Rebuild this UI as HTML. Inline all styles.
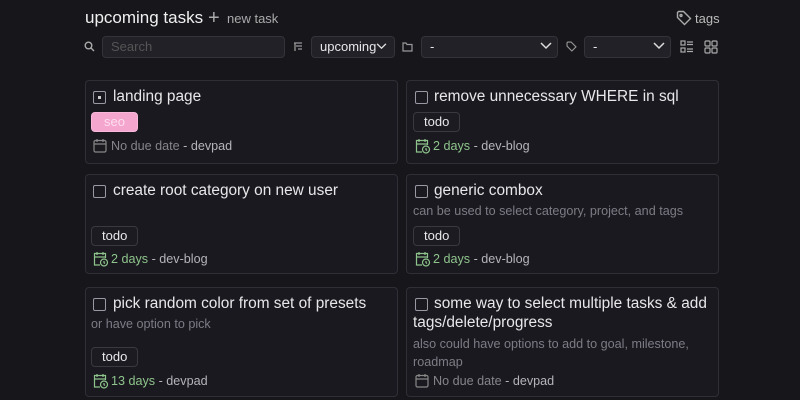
<!DOCTYPE html>
<html><head><meta charset="utf-8"><style>
*{margin:0;padding:0;box-sizing:border-box}
body{width:800px;height:400px;background:#17161b;font-family:"Liberation Sans",sans-serif;position:relative;overflow:hidden;color:#e6e6e6}
.a{position:absolute;white-space:nowrap}
.card{position:absolute;background:#1a191f;border:1px solid #302f37;border-radius:4px}
.cb{position:absolute;width:13px;height:13px;border:1.6px solid #9a99a3;border-radius:2px}
.t{position:absolute;font-size:15.4px;color:#e8e8ea;line-height:20px;white-space:nowrap}
.d{position:absolute;font-size:12.6px;color:#7d7c86;line-height:19px;white-space:nowrap}
.tag{position:absolute;height:20px;border:1px solid #3a3940;border-radius:4px;font-size:13px;line-height:18px;color:#e8e8ea;padding:0 10px;background:#1c1b21}
.f{position:absolute;font-size:12.6px;line-height:16px;white-space:nowrap;color:#b5b4bb}
.f svg{position:absolute;left:0;top:0}
.f>span{position:absolute;left:18px;top:0}
.g{color:#8ec48c}.n{color:#85848d}
.sel{position:absolute;height:22px;background:#222127;border:1px solid #34333a;border-radius:4px;font-size:13px;color:#e8e8ea;line-height:20px;padding-left:8px}
</style></head><body>
<div class="a" style="left:85px;top:8px;font-size:17px;color:#f0f0f0">upcoming tasks</div>
<div class="a" style="left:208px;top:7px;font-size:20px;color:#aaa">+</div>
<div class="a" style="left:227px;top:11px;font-size:13px;color:#aaa">new task</div>
<svg class="a" style="left:676px;top:10px" width="16" height="16" viewBox="0 0 16 16" fill="none" stroke="#aaa" stroke-width="1.4"><path d="M1.5 2.5v5l7 7 6-6-7-7h-5z"/><circle cx="5" cy="5.5" r="1"/></svg>
<div class="a" style="left:695px;top:11px;font-size:13px;color:#bbb">tags</div>
<svg class="a" style="left:84px;top:41px" width="11" height="11" viewBox="0 0 11 11" fill="none" stroke="#aaa" stroke-width="1.4"><circle cx="4.5" cy="4.5" r="3.3"/><path d="M7 7l3 3"/></svg>
<div class="sel" style="left:102px;top:36px;width:183px;color:#555">Search</div>
<svg class="a" style="left:293px;top:42px" width="10" height="10" viewBox="0 0 10 10" stroke="#999" stroke-width="1.3"><path d="M1 1h8M3 4h6M5 7h4M2 1v8"/></svg>
<div class="sel" style="left:311px;top:36px;width:84px">upcoming</div>
<svg class="a" style="left:376px;top:43px" width="11" height="7" viewBox="0 0 12 8" fill="none" stroke="#ddd" stroke-width="1.5"><path d="M1 1l5 5 5-5"/></svg>
<svg class="a" style="left:402px;top:42px" width="11" height="10" viewBox="0 0 11 10" fill="none" stroke="#999" stroke-width="1.2"><path d="M1 1h3l1 1.5h5v6.5H1z"/></svg>
<div class="sel" style="left:421px;top:36px;width:137px">-</div>
<svg class="a" style="left:540px;top:42px" width="12" height="8" viewBox="0 0 12 8" fill="none" stroke="#ddd" stroke-width="1.5"><path d="M1 1l5 5 5-5"/></svg>
<svg class="a" style="left:566px;top:41px" width="11" height="11" viewBox="0 0 16 16" fill="none" stroke="#999" stroke-width="1.6"><path d="M1.5 2.5v5l7 7 6-6-7-7h-5z"/></svg>
<div class="sel" style="left:584px;top:36px;width:87px">-</div>
<svg class="a" style="left:653px;top:42px" width="12" height="8" viewBox="0 0 12 8" fill="none" stroke="#ddd" stroke-width="1.5"><path d="M1 1l5 5 5-5"/></svg>
<svg class="a" style="left:680px;top:40px" width="14" height="14" viewBox="0 0 14 14" fill="none" stroke="#aaa" stroke-width="1.2"><rect x="1" y="1" width="4" height="4"/><rect x="1" y="8" width="4" height="4"/><path d="M7 2h6M7 4.5h6M7 9h6M7 11.5h6"/></svg>
<svg class="a" style="left:704px;top:40px" width="14" height="14" viewBox="0 0 14 14" fill="none" stroke="#aaa" stroke-width="1.2"><rect x="1" y="1" width="5" height="5" rx="1"/><rect x="8" y="1" width="5" height="5" rx="1"/><rect x="1" y="8" width="5" height="5" rx="1"/><rect x="8" y="8" width="5" height="5" rx="1"/></svg>

<div class="card" style="left:85px;top:80px;width:313px;height:84px"></div>
<div class="card" style="left:406px;top:80px;width:313px;height:84px"></div>
<div class="card" style="left:85px;top:174px;width:313px;height:100px"></div>
<div class="card" style="left:406px;top:174px;width:313px;height:100px"></div>
<div class="card" style="left:85px;top:287px;width:313px;height:110px"></div>
<div class="card" style="left:406px;top:287px;width:313px;height:110px"></div>

<div class="cb" style="left:93px;top:91px"></div><div class="a" style="left:98px;top:96px;width:3px;height:3px;background:#ccc"></div>
<div class="t" style="left:113px;top:87px">landing page</div>
<div class="tag" style="left:91px;top:112px;background:#f4a6cf;border-color:#f7b8da;color:#fde;padding:0 12px">seo</div>
<div class="f" style="left:93px;top:138px"><svg width="14" height="15" viewBox="0 0 14 15" fill="none" stroke="#888" stroke-width="1.2"><rect x="1" y="2.5" width="12" height="11.5" rx="1.5"/><path d="M1 6h12M4 1v3M10 1v3"/></svg><span><span class="n">No due date</span> - devpad</span></div>

<div class="cb" style="left:415px;top:91px"></div>
<div class="t" style="left:434px;top:87px">remove unnecessary WHERE in sql</div>
<div class="tag" style="left:413px;top:112px">todo</div>
<div class="f" style="left:415px;top:138px"><svg width="16" height="16" viewBox="0 0 16 16" fill="none" stroke="#8ec48c" stroke-width="1.2"><path d="M7 14H1.5V2.5h11V7M1.5 6h11M4 1v3M10 1v3"/><circle cx="11" cy="11.5" r="3.5"/><path d="M11 10v1.7l1 .8"/></svg><span><span class="g">2 days</span> - dev-blog</span></div>

<div class="cb" style="left:93px;top:185px"></div>
<div class="t" style="left:113px;top:181px">create root category on new user</div>
<div class="tag" style="left:91px;top:226px">todo</div>
<div class="f" style="left:93px;top:251px"><svg width="16" height="16" viewBox="0 0 16 16" fill="none" stroke="#8ec48c" stroke-width="1.2"><path d="M7 14H1.5V2.5h11V7M1.5 6h11M4 1v3M10 1v3"/><circle cx="11" cy="11.5" r="3.5"/><path d="M11 10v1.7l1 .8"/></svg><span><span class="g">2 days</span> - dev-blog</span></div>

<div class="cb" style="left:415px;top:185px"></div>
<div class="t" style="left:434px;top:181px">generic combox</div>
<div class="d" style="left:413px;top:202px">can be used to select category, project, and tags</div>
<div class="tag" style="left:413px;top:226px">todo</div>
<div class="f" style="left:415px;top:251px"><svg width="16" height="16" viewBox="0 0 16 16" fill="none" stroke="#8ec48c" stroke-width="1.2"><path d="M7 14H1.5V2.5h11V7M1.5 6h11M4 1v3M10 1v3"/><circle cx="11" cy="11.5" r="3.5"/><path d="M11 10v1.7l1 .8"/></svg><span><span class="g">2 days</span> - dev-blog</span></div>

<div class="cb" style="left:93px;top:298px"></div>
<div class="t" style="left:113px;top:294px">pick random color from set of presets</div>
<div class="d" style="left:91px;top:315px">or have option to pick</div>
<div class="tag" style="left:91px;top:347px">todo</div>
<div class="f" style="left:93px;top:373px"><svg width="16" height="16" viewBox="0 0 16 16" fill="none" stroke="#8ec48c" stroke-width="1.2"><path d="M7 14H1.5V2.5h11V7M1.5 6h11M4 1v3M10 1v3"/><circle cx="11" cy="11.5" r="3.5"/><path d="M11 10v1.7l1 .8"/></svg><span><span class="g">13 days</span> - devpad</span></div>

<div class="cb" style="left:415px;top:298px"></div>
<div class="t" style="left:434px;top:294px">some way to select multiple tasks &amp; add</div>
<div class="t" style="left:413px;top:313px">tags/delete/progress</div>
<div class="d" style="left:413px;top:335px">also could have options to add to goal, milestone,</div>
<div class="d" style="left:413px;top:353px">roadmap</div>
<div class="f" style="left:415px;top:373px"><svg width="14" height="15" viewBox="0 0 14 15" fill="none" stroke="#888" stroke-width="1.2"><rect x="1" y="2.5" width="12" height="11.5" rx="1.5"/><path d="M1 6h12M4 1v3M10 1v3"/></svg><span><span class="n">No due date</span> - devpad</span></div>
</body></html>
